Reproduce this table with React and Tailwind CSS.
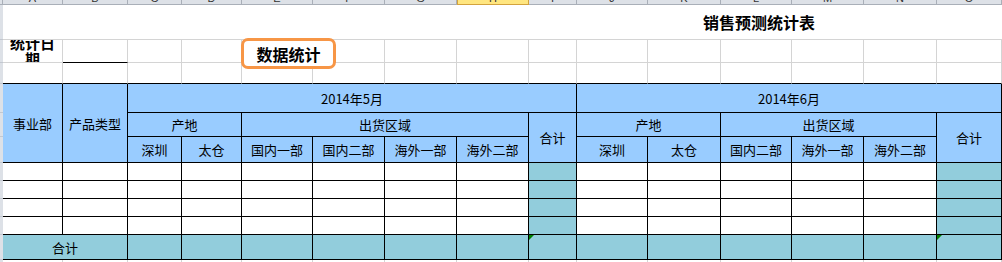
const COLS =
  "grid-cols-[3px_60px_65px_54px_60px_71px_72px_72px_72px_48px_71px_73px_71px_72px_73px_65px]";
const ROWS =
  "grid-rows-[5px_35px_23px_21px_29px_24px_26px_18px_18px_18px_18px_25px_30px]";

const letters = ["A", "B", "C", "D", "E", "F", "G", "H", "I", "J", "K", "L", "M", "N", "O"];

// cell styles
const rh = "bg-[#DDE1E7] border-b border-[#C3C8D0]";
const light = "border-r border-b border-[#D4D4D4]";
const head = "bg-[#99CCFF] border-r border-b border-black flex items-center justify-center text-[13px] leading-none";
const plain = "bg-white border-r border-b border-black";
const teal = "bg-[#92CDDC] border-r border-b border-black";

function Flag() {
  return (
    <span className="absolute top-0 left-0 w-0 h-0 border-t-[5px] border-r-[5px] border-t-[#008000] border-r-transparent" />
  );
}

export default function App() {
  return (
    <div className="relative w-[1002px] h-[262px] overflow-hidden bg-white text-black font-['Noto_Sans_CJK_SC',sans-serif]">
      <div className={`grid ${COLS} ${ROWS}`}>
        {/* column header strip */}
        <div className="bg-[#DDE1E7] border-r border-b border-[#A9AFB8]" />
        {letters.map((l) => (
          <div
            key={l}
            className={
              l === "H"
                ? "h-[5px] overflow-hidden bg-[#FFE680] border-x border-b border-[#D3A33E]"
                : "h-[5px] overflow-hidden bg-[#DDE1E7] border-r border-b border-[#A9AFB8]"
            }
          >
            <div className="-mt-[7px] text-center text-[11px] leading-[11px] text-[#333] font-['Liberation_Sans',sans-serif]">
              {l}
            </div>
          </div>
        ))}

        {/* row 1: title */}
        <div className={rh} />
        <div className="col-span-15 border-b border-[#D4D4D4] flex items-center pl-[700px]">
          <span className="text-[16px] font-bold leading-none whitespace-nowrap">销售预测统计表</span>
        </div>

        {/* row 2 */}
        <div className={rh} />
        <div className={`${light} overflow-hidden flex items-center justify-center`}>
          <div className="text-[15px] font-bold leading-[16px] text-center w-[48px]">统计日期</div>
        </div>
        <div className="border-r border-[#D4D4D4] border-b border-b-black" />
        {letters.slice(2).map((l) => (
          <div key={l} className={light} />
        ))}

        {/* row 3 */}
        <div className={rh} />
        {letters.map((l) => (
          <div key={l} className="border-r border-[#D4D4D4] border-b border-b-black" />
        ))}

        {/* header a */}
        <div className={rh} />
        <div className={`${head} row-span-3`}>事业部</div>
        <div className={`${head} row-span-3`}>产品类型</div>
        <div className={`${head} col-span-7`}>2014年5月</div>
        <div className={`${head} col-span-6`}>2014年6月</div>

        {/* header b */}
        <div className={rh} />
        <div className={`${head} col-span-2`}>产地</div>
        <div className={`${head} col-span-4`}>出货区域</div>
        <div className={`${head} row-span-2`}>合计</div>
        <div className={`${head} col-span-2`}>产地</div>
        <div className={`${head} col-span-3`}>出货区域</div>
        <div className={`${head} row-span-2`}>合计</div>

        {/* header c */}
        <div className={rh} />
        {["深圳", "太仓", "国内一部", "国内二部", "海外一部", "海外二部", "深圳", "太仓", "国内二部", "海外一部", "海外二部"].map(
          (t, i) => (
            <div key={i} className={head}>
              {t}
            </div>
          )
        )}

        {/* data rows */}
        {[0, 1, 2, 3].map((r) => [
          <div key={`rh${r}`} className={rh} />,
          ...letters.map((l) => (
            <div key={`${r}${l}`} className={l === "I" || l === "O" ? teal : plain} />
          )),
        ])}

        {/* total row */}
        <div className={rh} />
        <div className={`${teal} col-span-2 flex items-center justify-center text-[13px] leading-none`}>合计</div>
        {letters.slice(2).map((l) => (
          <div key={l} className={`${teal} relative`}>
            {(l === "I" || l === "O") && <Flag />}
          </div>
        ))}

        {/* filler row */}
        <div className={rh} />
        {letters.map((l) => (
          <div key={l} className="border-r border-[#D4D4D4]" />
        ))}
      </div>

      {/* floating text box */}
      <div className="absolute left-[241px] top-[38px] w-[95px] h-[31px] rounded-[7px] border-[3px] border-[#F79646] bg-white flex items-center justify-center">
        <span className="text-[16px] font-bold leading-none">数据统计</span>
      </div>
    </div>
  );
}
